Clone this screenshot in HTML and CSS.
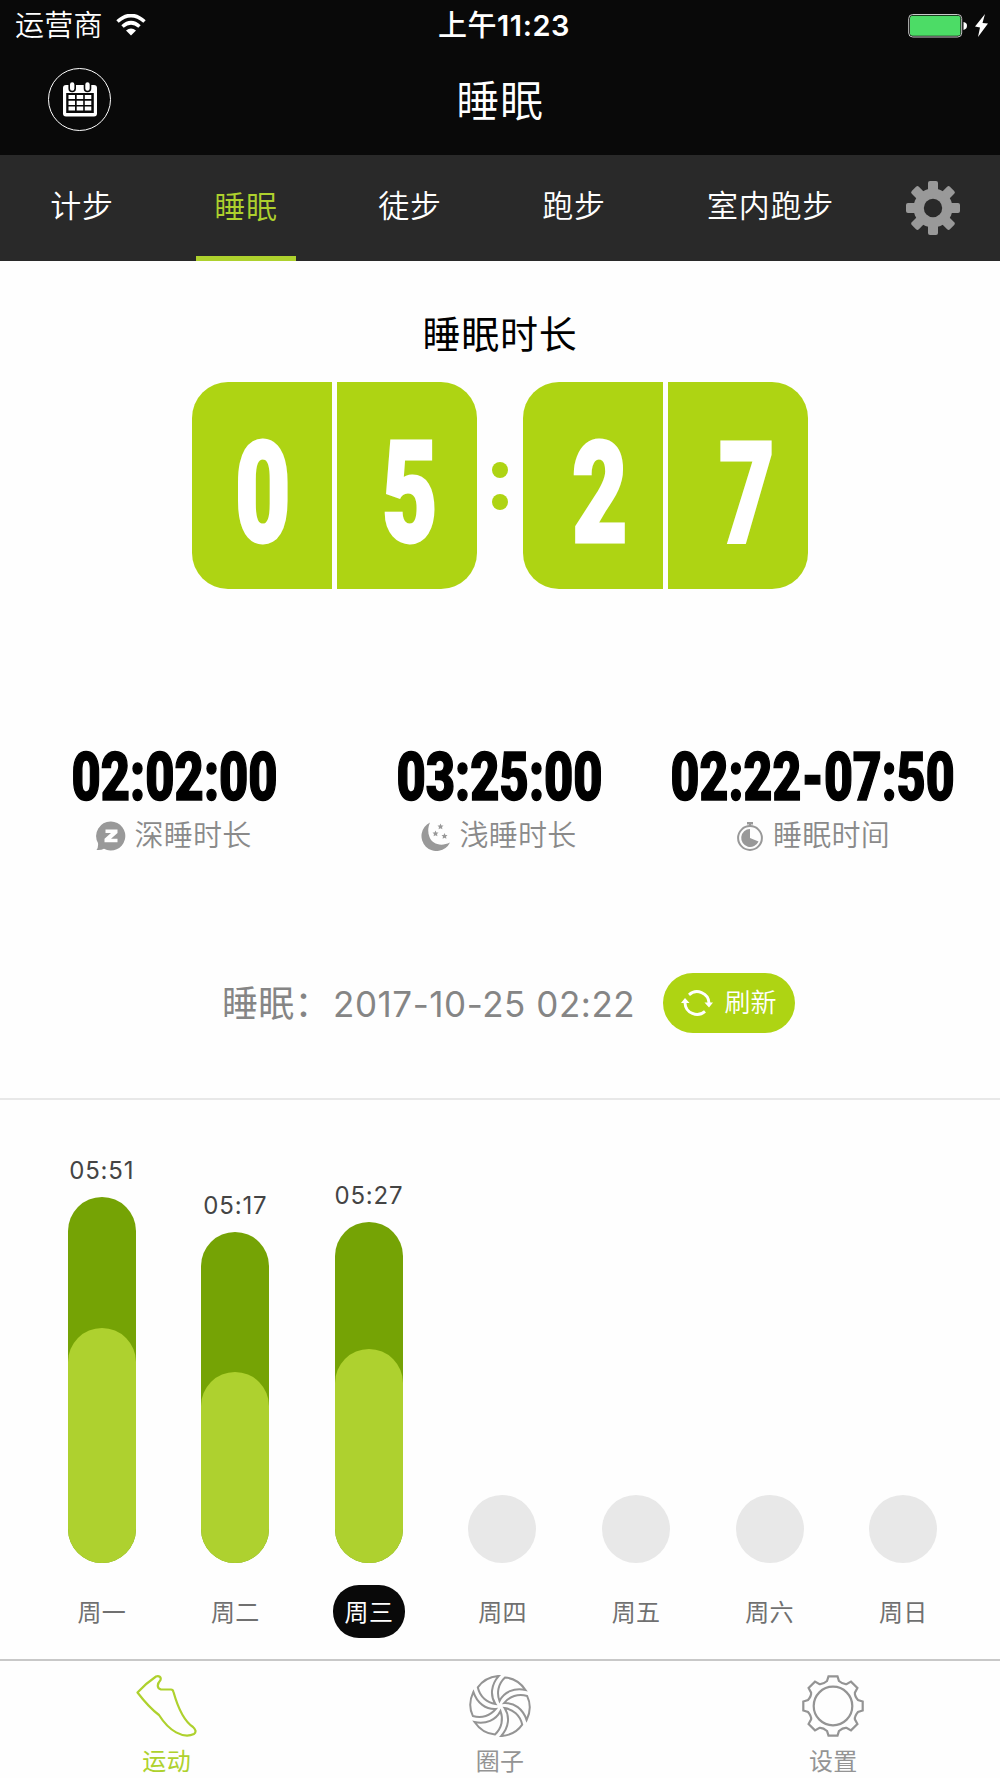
FILE: index.html
```html
<!DOCTYPE html>
<html lang="zh-CN">
<head>
    <meta charset="UTF-8">
    <meta name="viewport" content="width=device-width, initial-scale=1.0">
    <title>睡眠</title>
    <link rel="stylesheet" href="styles.css">
</head>
<body>
    <!-- Status bar -->
    <div class="status-bar">
        <div class="carrier">
            <span>运营商</span>
            <svg class="wifi" width="30" height="22" viewBox="0 0 30 22">
                <path d="M1.500 7.500 Q15 -4.500 28.500 7.500" fill="none" stroke="#fff" stroke-width="3.600"/>
                <path d="M6.500 12.500 Q15 5 23.500 12.500" fill="none" stroke="#fff" stroke-width="3.600"/>
                <path d="M10 16.500 Q15 12.500 20 16.500 L15 21.500 Z" fill="#fff"/>
            </svg>
        </div>
        <div class="clock">上午<b>11:23</b></div>
        <div class="power">
            <svg width="80" height="26" viewBox="0 0 80 26">
                <rect x="0.700" y="1.500" width="53" height="22.500" rx="4" fill="#090909" stroke="#c9c9c9" stroke-width="1"/>
                <rect x="2" y="2.800" width="50.400" height="20" rx="2.500" fill="#4cdc66"/>
                <path d="M55.500 9 Q59 9.500 59 12.800 Q59 16 55.500 17 Z" fill="#fff"/>
                <path d="M77 1 L67 13.500 L72 14.500 L70 24 L80 10.500 L74.500 10 Z" fill="#fff"/>
            </svg>
        </div>
    </div>

    <!-- Header -->
    <header class="header">
        <button class="calendar" aria-label="日历">
            <svg width="34" height="36" viewBox="0 0 34 36">
                <rect x="0" y="3" width="34" height="31.500" rx="3" fill="#fff"/>
                <rect x="3.200" y="11" width="27.600" height="20" fill="#090909"/>
                <g fill="#fff" stroke="#090909" stroke-width="1.600">
                    <rect x="6.200" y="-0.500" width="6" height="10" rx="3"/>
                    <rect x="21.500" y="-0.500" width="6" height="10" rx="3"/>
                </g>
                <path d="M5.500 15h6.500M13.700 15h6.500M21.800 15h6.500M5.500 20.800h6.500M13.700 20.800h6.500M21.800 20.800h6.500M5.500 26.500h6.500M13.700 26.500h6.500M21.800 26.500h6.500" stroke="#fff" stroke-width="4.200"/>
            </svg>
        </button>
        <h1>睡眠</h1>
    </header>

    <!-- Tabs -->
    <nav class="tabs">
        <a class="tab">计步</a>
        <a class="tab active">睡眠</a>
        <a class="tab">徒步</a>
        <a class="tab">跑步</a>
        <a class="tab wide">室内跑步</a>
        <svg class="gear" width="54" height="54" viewBox="-27 -27 54 54">
            <g fill="#999">
                <rect x="-5" y="-27" width="10" height="54" rx="2"/>
                <rect x="-5" y="-27" width="10" height="54" rx="2" transform="rotate(45)"/>
                <rect x="-5" y="-27" width="10" height="54" rx="2" transform="rotate(90)"/>
                <rect x="-5" y="-27" width="10" height="54" rx="2" transform="rotate(135)"/>
                <circle r="19.500"/>
            </g>
            <circle r="9.200" fill="#292929"/>
        </svg>
    </nav>

    <!-- Sleep duration -->
    <section class="duration">
        <h2>睡眠时长</h2>
        <div class="flip">
            <div class="tile left"><span class="d0">0</span></div>
            <div class="tile right"><span class="d1">5</span></div>
            <div class="colon"><i></i><i></i></div>
            <div class="tile left"><span class="d2">2</span></div>
            <div class="tile right"><span class="d3">7</span></div>
        </div>
    </section>

    <!-- Stats -->
    <section class="stats">
        <div class="stat">
            <div class="value">02:02:00</div>
            <div class="label">
                <svg width="30" height="30" viewBox="0 0 30 30">
                    <path d="M15 0.500 A14.500 14.500 0 1 1 8 27.800 Q5 29.500 0.500 29 Q2.500 26.500 2 22 A14.500 14.500 0 0 1 15 0.500Z" fill="#999"/>
                    <path d="M9.500 8.500 H21.500 V12 L15 17.800 H21.500 V21.300 H8.500 V17.800 L15 12 H9.500Z" fill="#fff"/>
                </svg>
                <span>深睡时长</span>
            </div>
        </div>
        <div class="stat">
            <div class="value">03:25:00</div>
            <div class="label">
                <svg width="30" height="30" viewBox="0 0 30 30">
                    <path d="M9 1.500 A15 15 0 1 0 29 21.500 C20 26 11 23 8.500 16 C6.500 11 7 6 9 1.500Z" fill="#999"/>
                    <g fill="#999">
                        <path id="star" d="M19.500 2.500l.9 1.900 2.100.2-1.500 1.500.4 2.100-1.900-1-1.900 1 .4-2.100-1.500-1.500 2.100-.2z"/>
                        <use href="#star" x="-5" y="7"/>
                        <use href="#star" x="4" y="9.500"/>
                    </g>
                </svg>
                <span>浅睡时长</span>
            </div>
        </div>
        <div class="stat">
            <div class="value range">02:22-07:50</div>
            <div class="label">
                <svg width="30" height="30" viewBox="0 0 30 30">
                    <circle cx="15" cy="17" r="11.900" fill="none" stroke="#999" stroke-width="2"/>
                    <path d="M12 1 H18 V3.500 H12Z M14 3 H16 V6 H14Z" fill="#999"/>
                    <path d="M15 17 V8 A9 9 0 1 0 23.500 20.500Z" fill="#999"/>
                </svg>
                <span>睡眠时间</span>
            </div>
        </div>
    </section>

    <!-- Last sync -->
    <section class="sync">
        <span class="sync-label">睡眠：</span>
        <span class="sync-time">2017-10-25 02:22</span>
        <button class="refresh">
            <svg width="32" height="32" viewBox="0 0 32 32">
                <path d="M8 7.800 A12 12 0 0 1 28 16 M24 24.300 A12 12 0 0 1 4 16" fill="none" stroke="#fff" stroke-width="2.900"/>
                <path d="M23.500 15.500 H32 L28 20.500Z M0 16 H8.500 L4 11Z" fill="#fff"/>
            </svg>
            <span>刷新</span>
        </button>
    </section>

    <!-- Weekly chart -->
    <section class="chart">
        <div class="day">
            <span class="time">05:51</span>
            <div class="bar" style="height: 366px"><div class="light" style="height: 235px"></div></div>
            <span class="name">周一</span>
        </div>
        <div class="day">
            <span class="time">05:17</span>
            <div class="bar" style="height: 331px"><div class="light" style="height: 191px"></div></div>
            <span class="name">周二</span>
        </div>
        <div class="day today">
            <span class="time">05:27</span>
            <div class="bar" style="height: 341px"><div class="light" style="height: 214px"></div></div>
            <span class="name">周三</span>
        </div>
        <div class="day">
            <div class="bar empty"></div>
            <span class="name">周四</span>
        </div>
        <div class="day">
            <div class="bar empty"></div>
            <span class="name">周五</span>
        </div>
        <div class="day">
            <div class="bar empty"></div>
            <span class="name">周六</span>
        </div>
        <div class="day">
            <div class="bar empty"></div>
            <span class="name">周日</span>
        </div>
    </section>

    <!-- Bottom navigation -->
    <nav class="bottom-nav">
        <a class="active">
            <svg width="62" height="62" viewBox="0 0 62 62">
                <path d="M1.500 17.500 C8 10.500 14 5.500 20 1.500 C23 0.500 25.500 2 24.500 5 C21 9 20.500 13 25 14.500 H35 Q37 14.500 37.500 17 C42 33 48 46 57 52 Q61.500 56 58 59 C47 64 33 56 23 40 C15 34 8 26 1.500 17.500Z" fill="none" stroke="#aed12d" stroke-width="2.200" stroke-linejoin="round"/>
            </svg>
            <span>运动</span>
        </a>
        <a>
            <svg width="62" height="62" viewBox="-31 -31 62 62">
                <g fill="none" stroke="#949494" stroke-width="2">
                    <path id="blade" d="M25.500 -16 C20 -24 12 -28 5 -28.500 C-2 -22 -3.500 -13 -0.500 -5 C4 -14 14 -18.500 25.500 -16Z"/>
                    <use href="#blade" transform="rotate(60)"/>
                    <use href="#blade" transform="rotate(120)"/>
                    <use href="#blade" transform="rotate(180)"/>
                    <use href="#blade" transform="rotate(240)"/>
                    <use href="#blade" transform="rotate(300)"/>
                </g>
            </svg>
            <span>圈子</span>
        </a>
        <a>
            <svg width="62" height="62" viewBox="-31 -31 62 62">
                <g fill="none" stroke="#949494" stroke-width="2.200">
                    <path d="M-6 -25 L-4.500 -29.700 H4.500 L6 -25 Q10 -21.500 13.400 -21.900 L18 -24.400 L24.400 -18 L21.900 -13.400 Q21.500 -10 25 -6 L29.700 -4.500 V4.500 L25 6 Q21.500 10 21.900 13.400 L24.400 18 L18 24.400 L13.400 21.900 Q10 21.500 6 25 L4.500 29.700 H-4.500 L-6 25 Q-10 21.500 -13.400 21.900 L-18 24.400 L-24.400 18 L-21.900 13.400 Q-21.500 10 -25 6 L-29.700 4.500 V-4.500 L-25 -6 Q-21.500 -10 -21.900 -13.400 L-24.400 -18 L-18 -24.400 L-13.400 -21.900 Q-10 -21.500 -6 -25Z"/>
                    <circle r="19.300"/>
                </g>
            </svg>
            <span>设置</span>
        </a>
    </nav>
</body>
</html>
```
FILE: styles.css
```css
* {
    box-sizing: border-box;
}
body {
    margin: 0;
    width: 1000px;
    height: 1778px;
    display: flex;
    flex-direction: column;
    background: #fefefe;
    font-family: Inter, "Noto Sans CJK SC", sans-serif;
    overflow: hidden;
}
h1, h2 {
    margin: 0;
    font-weight: 400;
}
button {
    border: none;
    padding: 0;
    font-family: inherit;
}

/* Status bar */
.status-bar {
    height: 50px;
    background: #090909;
    color: white;
    display: grid;
    grid-template-columns: 1fr auto 1fr;
    align-items: center;
    padding: 0 12px 0 15px;
    font-size: 29px;
    line-height: 52px;
}
.carrier {
    display: flex;
    align-items: center;
    gap: 13px;
    letter-spacing: 0.3px;
    font-weight: 350;
}
.wifi {
    margin-top: -2px;
}
.clock {
    padding-left: 5px;
    font-weight: 500;
    letter-spacing: 0.5px;
}
.clock b {
    font-weight: 600;
}
.power {
    display: flex;
    justify-content: flex-end;
}

/* Header */
.header {
    height: 105px;
    background: #090909;
    color: white;
    display: grid;
    grid-template-columns: 112px 1fr 112px;
    align-items: start;
}
.header h1 {
    font-size: 43px;
    font-weight: 350;
    letter-spacing: 0.8px;
    line-height: 60px;
    margin-top: 21px;
    text-align: center;
}
.calendar {
    width: 63px;
    height: 63px;
    margin: 18px 0 0 48px;
    border: 1.5px solid white;
    border-radius: 50%;
    background: none;
    display: flex;
    align-items: center;
    justify-content: center;
}

/* Tabs */
.tabs {
    height: 106px;
    background: #292929;
    color: white;
    display: flex;
    align-items: center;
    padding-left: 32px;
}
.tab {
    width: 100px;
    height: 106px;
    margin-right: 64px;
    font-size: 31px;
    font-weight: 350;
    letter-spacing: 0.7px;
    line-height: 102px;
    text-align: center;
    white-space: nowrap;
}
.tab.wide {
    width: 165px;
    margin-right: 53px;
}
.tab.active {
    color: #aed12d;
    border-bottom: 5px solid #aed12d;
    height: 105px;
}

/* Sleep duration */
.duration {
    height: 489px;
    padding-top: 43px;
}
.duration h2 {
    font-size: 38px;
    letter-spacing: 0.8px;
    line-height: 60px;
    text-align: center;
    color: #000;
}
.flip {
    display: flex;
    justify-content: center;
    margin-top: 18px;
}
.tile {
    width: 140px;
    height: 207px;
    background: #aed413;
    color: white;
    display: flex;
    align-items: center;
    justify-content: center;
    font-family: Roboto, sans-serif;
    font-size: 141px;
    font-weight: 900;
    line-height: 207px;
}
.tile.left {
    border-radius: 36px 0 0 36px;
    margin-right: 5px;
}
.tile.right {
    border-radius: 0 36px 36px 0;
}
.tile span {
    transform: scaleX(0.68);
    padding-top: 15px;
    -webkit-text-stroke: 3px white;
}
.tile .d0 {
    margin-left: 1px;
}
.tile .d1 {
    margin-left: 6px;
}
.tile .d2 {
    margin-left: 14px;
}
.tile .d3 {
    margin-left: 18px;
}
.colon {
    width: 46px;
    display: flex;
    flex-direction: column;
    align-items: center;
    gap: 16px;
    padding-top: 80px;
}
.colon i {
    width: 16px;
    height: 16px;
    border-radius: 50%;
    background: #aed413;
}

/* Stats */
.stats {
    height: 200px;
    display: grid;
    grid-template-columns: 325px 325px 302px;
    padding-left: 12px;
}
.stat {
    display: flex;
    flex-direction: column;
    align-items: center;
}
.value {
    height: 54px;
    font-family: Roboto, sans-serif;
    font-size: 66px;
    font-weight: 900;
    line-height: 56px;
    color: #000;
    white-space: nowrap;
    transform: scaleX(0.766);
    -webkit-text-stroke: 1.5px #000;
}
.value.range {
    transform: scaleX(0.757);
}
.label {
    display: flex;
    align-items: center;
    gap: 8px;
    margin-top: 10px;
    margin-left: -1px;
    color: #8a8a8a;
    font-size: 29px;
    font-weight: 350;
    letter-spacing: 0.3px;
    line-height: 43px;
}

/* Last sync */
.sync {
    height: 150px;
    border-bottom: 2px solid #e8e8e8;
    display: flex;
    align-items: flex-start;
    padding: 23px 0 0 222px;
    color: #858585;
    font-size: 35px;
    line-height: 62px;
}
.sync-label {
    width: 111px;
    font-size: 36px;
    letter-spacing: 0.3px;
}
.sync-time {
    width: 330px;
    letter-spacing: 0.55px;
    white-space: nowrap;
}
.refresh {
    width: 132px;
    height: 60px;
    border-radius: 30px;
    background: #aed413;
    color: white;
    display: flex;
    align-items: center;
    justify-content: center;
    gap: 11px;
    font-size: 26px;
    font-weight: 350;
    line-height: 58px;
}

/* Weekly chart */
.chart {
    height: 559px;
    display: grid;
    grid-template-columns: repeat(7, 1fr);
    padding: 0 30px 21px 35px;
}
.day {
    display: flex;
    flex-direction: column;
    align-items: center;
    justify-content: flex-end;
}
.time {
    font-size: 24px;
    letter-spacing: 0.8px;
    line-height: 30px;
    margin-bottom: 11px;
    color: #444;
}
.bar {
    width: 68px;
    border-radius: 34px;
    background: #75a305;
    display: flex;
    align-items: flex-end;
}
.light {
    width: 68px;
    border-radius: 34px;
    background: #aed12f;
}
.bar.empty {
    height: 68px;
    background: #e8e8e8;
}
.name {
    width: 72px;
    height: 53px;
    margin-top: 22px;
    border-radius: 26px;
    font-size: 24px;
    letter-spacing: 0.3px;
    line-height: 55px;
    text-align: center;
    color: #707070;
}
.today .name {
    background: #090909;
    color: white;
}

/* Bottom navigation */
.bottom-nav {
    height: 119px;
    border-top: 2px solid #c8c8c8;
    display: grid;
    grid-template-columns: repeat(3, 1fr);
}
.bottom-nav a {
    display: flex;
    flex-direction: column;
    align-items: center;
    padding-top: 14px;
    color: #949494;
    font-size: 24px;
    letter-spacing: 0.3px;
    line-height: 30px;
}
.bottom-nav span {
    margin-top: 10px;
}
.bottom-nav a.active {
    color: #aed12d;
}
```
